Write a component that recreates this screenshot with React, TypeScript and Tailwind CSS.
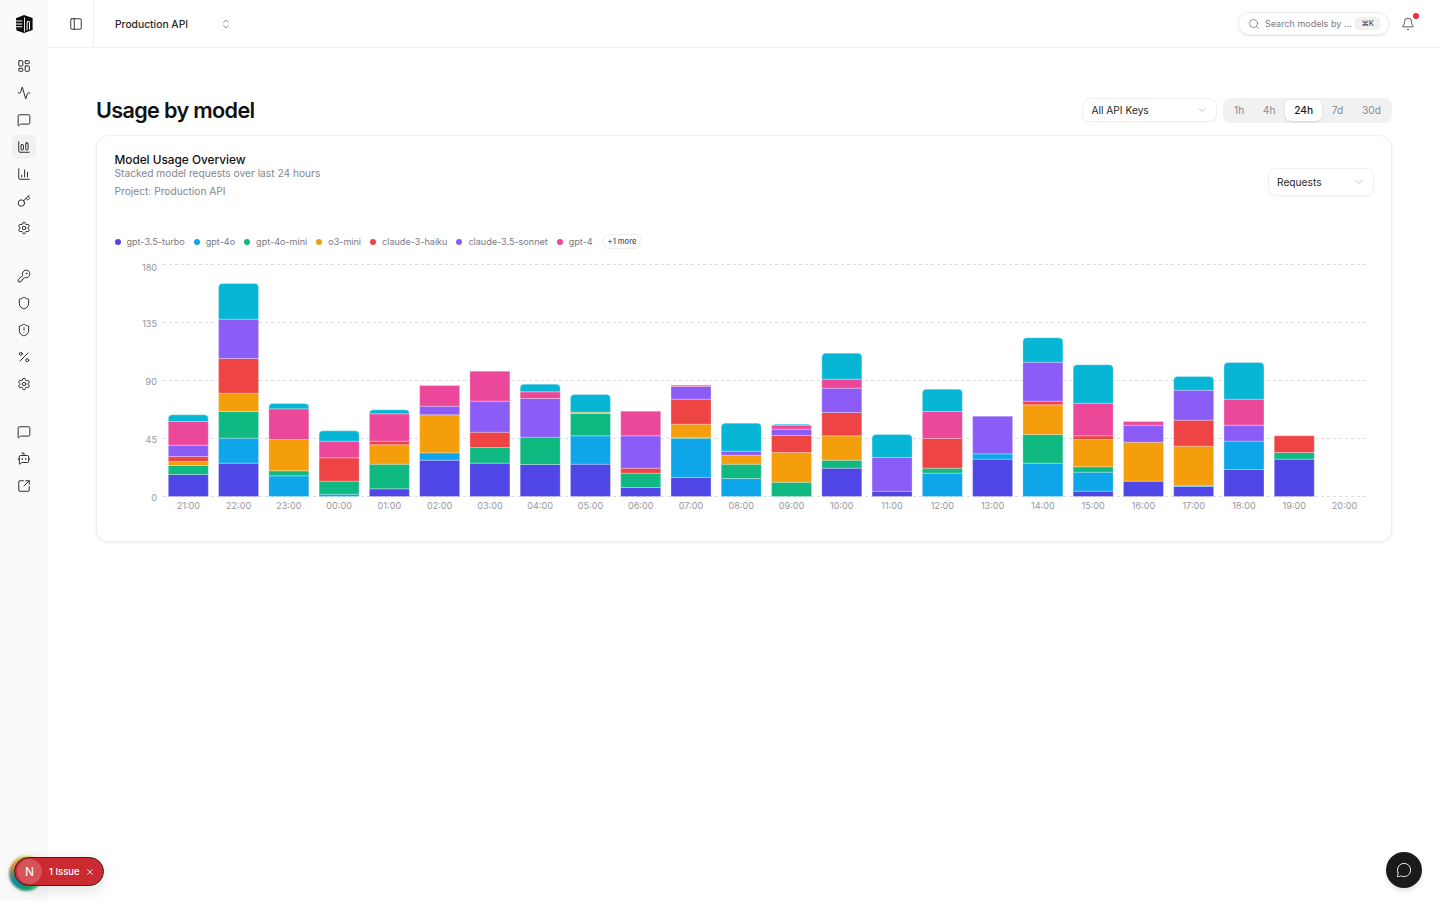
import {
  Activity,
  Bell,
  BotMessageSquare,
  ChartColumn,
  ChartColumnBig,
  ChevronDown,
  ChevronsUpDown,
  Key,
  KeyRound,
  LayoutDashboard,
  MessageCircle,
  MessageSquare,
  PanelLeft,
  Percent,
  Search,
  Settings,
  Shield,
  ShieldAlert,
  SquareArrowOutUpRight,
  X,
} from "lucide-react";
import type { ComponentType } from "react";

const COLORS = {
  indigo: "#4f46e5",
  blue: "#0ea5e9",
  green: "#10b981",
  orange: "#f59e0b",
  red: "#ef4444",
  purple: "#8b5cf6",
  pink: "#ec4899",
  cyan: "#06b6d4",
} as const;

type Series = keyof typeof COLORS;

const LEGEND: { label: string; color: Series }[] = [
  { label: "gpt-3.5-turbo", color: "indigo" },
  { label: "gpt-4o", color: "blue" },
  { label: "gpt-4o-mini", color: "green" },
  { label: "o3-mini", color: "orange" },
  { label: "claude-3-haiku", color: "red" },
  { label: "claude-3.5-sonnet", color: "purple" },
  { label: "gpt-4", color: "pink" },
];

// each bar: series + top edge, measured in 3x picture pixels above a baseline of 710
const BARS: { hour: string; stack: [Series, number][] }[] = [
  { hour: "21:00", stack: [["indigo", 644], ["green", 617], ["orange", 605], ["red", 590], ["purple", 556], ["pink", 485], ["cyan", 465]] },
  { hour: "22:00", stack: [["indigo", 610], ["blue", 535], ["green", 455], ["orange", 400], ["red", 296], ["purple", 178], ["cyan", 71]] },
  { hour: "23:00", stack: [["blue", 648], ["green", 633], ["orange", 539], ["pink", 447], ["cyan", 431]] },
  { hour: "00:00", stack: [["blue", 703], ["green", 664], ["red", 594], ["pink", 544], ["cyan", 513]] },
  { hour: "01:00", stack: [["indigo", 687], ["green", 613], ["orange", 555], ["red", 544], ["pink", 462], ["cyan", 450]] },
  { hour: "02:00", stack: [["indigo", 601], ["blue", 579], ["orange", 465], ["purple", 439], ["pink", 377]] },
  { hour: "03:00", stack: [["indigo", 610], ["green", 563], ["red", 517], ["purple", 424], ["pink", 334]] },
  { hour: "04:00", stack: [["indigo", 614], ["green", 532], ["purple", 416], ["pink", 396], ["cyan", 373]] },
  { hour: "05:00", stack: [["indigo", 613], ["blue", 528], ["green", 461], ["orange", 457], ["cyan", 404]] },
  { hour: "06:00", stack: [["indigo", 683], ["green", 640], ["red", 625], ["purple", 528], ["pink", 454]] },
  { hour: "07:00", stack: [["indigo", 653], ["blue", 536], ["green", 532], ["orange", 493], ["red", 418], ["purple", 380], ["pink", 376]] },
  { hour: "08:00", stack: [["blue", 656], ["green", 613], ["orange", 586], ["purple", 574], ["cyan", 490]] },
  { hour: "09:00", stack: [["green", 667], ["orange", 578], ["red", 527], ["purple", 508], ["pink", 496], ["cyan", 493]] },
  { hour: "10:00", stack: [["indigo", 625], ["green", 601], ["orange", 528], ["red", 458], ["purple", 385], ["pink", 358], ["cyan", 280]] },
  { hour: "11:00", stack: [["indigo", 694], ["purple", 593], ["cyan", 524]] },
  { hour: "12:00", stack: [["blue", 640], ["green", 625], ["red", 536], ["pink", 455], ["cyan", 388]] },
  { hour: "13:00", stack: [["indigo", 598], ["blue", 582], ["purple", 469]] },
  { hour: "14:00", stack: [["blue", 610], ["green", 524], ["orange", 435], ["red", 424], ["purple", 307], ["cyan", 234]] },
  { hour: "15:00", stack: [["indigo", 694], ["blue", 637], ["green", 621], ["orange", 539], ["red", 528], ["pink", 430], ["cyan", 315]] },
  { hour: "16:00", stack: [["indigo", 664], ["orange", 547], ["purple", 496], ["pink", 485]] },
  { hour: "17:00", stack: [["indigo", 680], ["blue", 676], ["orange", 559], ["red", 481], ["purple", 391], ["cyan", 350]] },
  { hour: "18:00", stack: [["indigo", 629], ["blue", 544], ["purple", 496], ["pink", 418], ["cyan", 308]] },
  { hour: "19:00", stack: [["indigo", 598], ["green", 578], ["red", 528]] },
  { hour: "20:00", stack: [] },
];

const TICKS = [
  { label: "180", y: 4.5, nudge: 2.5 },
  { label: "135", y: 62.5, nudge: 0.5 },
  { label: "90", y: 120.5, nudge: 0.5 },
  { label: "45", y: 178.5, nudge: 0.5 },
  { label: "0", y: 236.5, nudge: 0.5 },
];

const BASE_Y = 236.5;
const STEP = 50.27;
const BAR_W = 40;
// the svg box lands on page x 115, first bar at page x 168.3
const FIRST_X = 53.3;
const GRID_X1 = 48;
const GRID_X2 = 1254;

function Logo() {
  return (
    <svg viewBox="0 0 18 18" className="h-[18px] w-[18px]">
      <path d="M9 0 17.6 3v12L9 18 1.6 15.4 1 12.6V3.2z" fill="#0c0c0e" />
      <path d="M0 5.6h7.2v1H0zM0 8.4h7.2v1H0zM0 11.2h7.2v1H0z" fill="#fff" />
      <path d="M9 2.4h.9v14.4H9z" fill="#fff" />
      <path d="M11.6 15.6V7.4q0-1.6 1.7-1.6t1.7 1.6v7.2h-1V7.6q0-.8-.7-.8t-.7.8v7.6z" fill="#fff" />
    </svg>
  );
}

function SideIcon({ icon: Icon, active }: { icon: ComponentType<{ className?: string; strokeWidth?: number }>; active?: boolean }) {
  return (
    <span
      className={`flex h-6 w-6 items-center justify-center rounded-md text-[#1f1f23] ${active ? "bg-[#f1f1f2]" : ""}`}
    >
      <Icon className="h-3.5 w-3.5" strokeWidth={1.6} />
    </span>
  );
}

function Sidebar() {
  return (
    <aside className="flex h-[900px] w-12 shrink-0 flex-col items-center bg-[#fafafa]">
      <div className="flex h-12 w-full items-center justify-center">
        <Logo />
      </div>
      <nav className="mt-1.5 flex flex-col gap-[3px]">
        <SideIcon icon={LayoutDashboard} />
        <SideIcon icon={Activity} />
        <SideIcon icon={MessageSquare} />
        <SideIcon icon={ChartColumnBig} active />
        <SideIcon icon={ChartColumn} />
        <SideIcon icon={Key} />
        <SideIcon icon={Settings} />
      </nav>
      <nav className="mt-6 flex flex-col gap-[3px]">
        <SideIcon icon={KeyRound} />
        <SideIcon icon={Shield} />
        <SideIcon icon={ShieldAlert} />
        <SideIcon icon={Percent} />
        <SideIcon icon={Settings} />
      </nav>
      <nav className="mt-6 flex flex-col gap-[3px]">
        <SideIcon icon={MessageSquare} />
        <SideIcon icon={BotMessageSquare} />
        <SideIcon icon={SquareArrowOutUpRight} />
      </nav>
    </aside>
  );
}

function Header() {
  return (
    <header className="flex h-12 shrink-0 items-center border-b border-[#f1f1f2]">
      <div className="flex h-full w-[46px] items-center justify-end border-r border-[#eeeeef] pr-[10px]">
        <PanelLeft className="h-3.5 w-3.5 text-[#1f1f23]" strokeWidth={1.5} />
      </div>
      <span className="ml-[21px] w-[105px] pt-[2px] text-[10.3px] font-medium text-[#27272a]">Production API</span>
      <ChevronsUpDown className="h-3 w-3 text-[#71717a]" strokeWidth={1.5} />
      <div className="ml-auto flex items-center">
        <div className="flex h-[23px] w-[151px] items-center rounded-full border border-[#eeeeef] pl-[9px] pr-[8px] shadow-sm">
          <Search className="h-3 w-3 shrink-0 text-[#71717a]" strokeWidth={1.5} />
          <span className="ml-[5px] whitespace-nowrap text-[9px] text-[#7a7a83]">Search models by ...</span>
          <span className="ml-auto rounded bg-[#f1f1f2] px-[6px] py-[1px] text-[7.5px] font-medium text-[#52525b]">⌘K</span>
        </div>
        <div className="relative ml-[12px] mr-[25px]">
          <Bell className="h-3.5 w-3.5 text-[#3f3f46]" strokeWidth={1.5} />
          <span className="absolute -right-1 -top-1 h-[6px] w-[6px] rounded-full bg-[#ef2b3a]" />
        </div>
      </div>
    </header>
  );
}

function Select({ label, className }: { label: string; className: string }) {
  return (
    <div className={`flex items-center justify-between rounded-lg border border-[#f1f1f2] bg-white pl-[8.5px] pr-2 text-[10.2px] text-[#27272a] shadow-[0_1px_2px_rgba(0,0,0,0.03)] ${className}`}>
      <span className="pt-px">{label}</span>
      <ChevronDown className="h-3 w-3 text-[#b4b4bb]" strokeWidth={1.5} />
    </div>
  );
}

function RangeTabs() {
  const tabs = ["1h", "4h", "24h", "7d", "30d"];
  return (
    <div className="flex h-[25px] w-[169px] items-center justify-between rounded-lg bg-[#f1f1f2] px-[2px] text-[10.2px] text-[#8a8a93]">
      {tabs.map((t) =>
        t === "24h" ? (
          <span key={t} className="flex h-[21px] w-[37px] items-center justify-center rounded-md bg-white pt-px font-medium text-[#18181b] shadow-sm">
            {t}
          </span>
        ) : (
          <span key={t} className="px-[9px] pt-px">
            {t}
          </span>
        ),
      )}
    </div>
  );
}

function Legend() {
  return (
    <div className="flex items-center text-[9.05px] text-[#7a7a83]">
      {LEGEND.map((item) => (
        <div key={item.label} className="mr-[9px] flex items-center gap-[6px]">
          <span className="h-[6px] w-[6px] rounded-full" style={{ backgroundColor: COLORS[item.color] }} />
          {item.label}
        </div>
      ))}
      <span className="rounded-full border border-[#eeeeef] px-[5px] py-[1px] text-[7.6px] font-medium text-[#52525b]">+1 more</span>
    </div>
  );
}

function Chart() {
  return (
    <svg width="1260" height="256" className="mt-[11px] block" fontFamily="Inter, sans-serif">
      {TICKS.map((t) => (
        <g key={t.label}>
          <line x1={GRID_X1} x2={GRID_X2} y1={t.y} y2={t.y} stroke="#dcdcdf" strokeDasharray="3 3" />
          <text x={42} y={t.y + 3.5 + t.nudge} textAnchor="end" fontSize="9.1" fill="#96969e">
            {t.label}
          </text>
        </g>
      ))}
      {BARS.map((bar, i) => {
        const x = FIRST_X + i * STEP;
        let prev = 710;
        return (
          <g key={bar.hour}>
            {bar.stack.map(([series, top], j) => {
              const y = BASE_Y - (710 - top) / 3;
              const h = (prev - top) / 3;
              prev = top;
              const isTop = j === bar.stack.length - 1 && series === "cyan";
              const d = isTop
                ? `M${x} ${y + h}V${y + 4}a4 4 0 0 1 4 -4H${x + BAR_W - 4}a4 4 0 0 1 4 4V${y + h}Z`
                : `M${x} ${y}H${x + BAR_W}V${y + h}H${x}Z`;
              return <path key={series} d={d} fill={COLORS[series]} stroke="#fff" strokeOpacity="0.35" strokeWidth="0.8" />;
            })}
            <text x={x + BAR_W / 2} y={BASE_Y + 12} textAnchor="middle" fontSize="9.1" fill="#96969e">
              {bar.hour}
            </text>
          </g>
        );
      })}
    </svg>
  );
}

export default function App() {
  return (
    <div className="relative flex h-[919px] w-full overflow-hidden bg-white font-['Inter',sans-serif]">
      <Sidebar />
      <div className="flex min-w-0 flex-1 flex-col">
        <Header />
        <main className="flex flex-col pl-12 pr-12">
          <div className="mt-[49px] flex h-[26px] items-center justify-between">
            <h1 className="text-[21.6px] font-semibold tracking-[-0.03em] text-[#111113]">Usage by model</h1>
            <div className="flex items-center gap-[6px]">
              <Select label="All API Keys" className="h-6 w-[135px]" />
              <RangeTabs />
            </div>
          </div>
          <section className="mt-[12px] h-[407px] rounded-xl border border-[#f0f0f1] bg-white px-[17.5px] pt-[17px] shadow-[0_1px_3px_rgba(0,0,0,0.08)]">
            <div className="flex items-start justify-between">
              <div>
                <h2 className="text-[11.8px] font-medium leading-[14px] text-[#111113]">Model Usage Overview</h2>
                <p className="text-[10.2px] leading-[13px] text-[#85858e]">Stacked model requests over last 24 hours</p>
                <p className="mt-[5px] text-[10.2px] leading-[13px] text-[#85858e]">Project: Production API</p>
              </div>
              <Select label="Requests" className="mt-[15px] h-[28px] w-[106px]" />
            </div>
            <div className="mt-[36px]">
              <Legend />
            </div>
            <Chart />
          </section>
        </main>
      </div>

      {/* dev overlay badge */}
      <div className="absolute left-[9px] top-[856px] h-[35px] w-[35px] rounded-full bg-[conic-gradient(#c9d63a,#a3d635,#4ade80,#22a06b,#0e8fa5,#e08a3a,#c9d63a)] blur-[1px]" />
      <div className="absolute left-[14px] top-[857px] flex h-[29px] w-[90px] items-center rounded-full border border-[#3a2226] bg-[#ca2a30] shadow-[0_4px_16px_rgba(0,0,0,0.12)]">
        <span className="ml-[2px] flex h-[25px] w-[25px] items-center justify-center rounded-full bg-white/20 text-[12px] font-normal text-white">N</span>
        <span className="ml-[7px] whitespace-nowrap pt-px text-[9.5px] font-medium text-white">1 Issue</span>
        <X className="ml-[5px] h-[10px] w-[10px] text-white" strokeWidth={2} />
      </div>
      <button className="absolute left-[1386px] top-[852px] flex h-9 w-9 items-center justify-center rounded-full bg-[#1a1a1c] shadow-md">
        <MessageCircle className="h-4 w-4 text-[#e5e5e5]" strokeWidth={1.5} />
      </button>
    </div>
  );
}
